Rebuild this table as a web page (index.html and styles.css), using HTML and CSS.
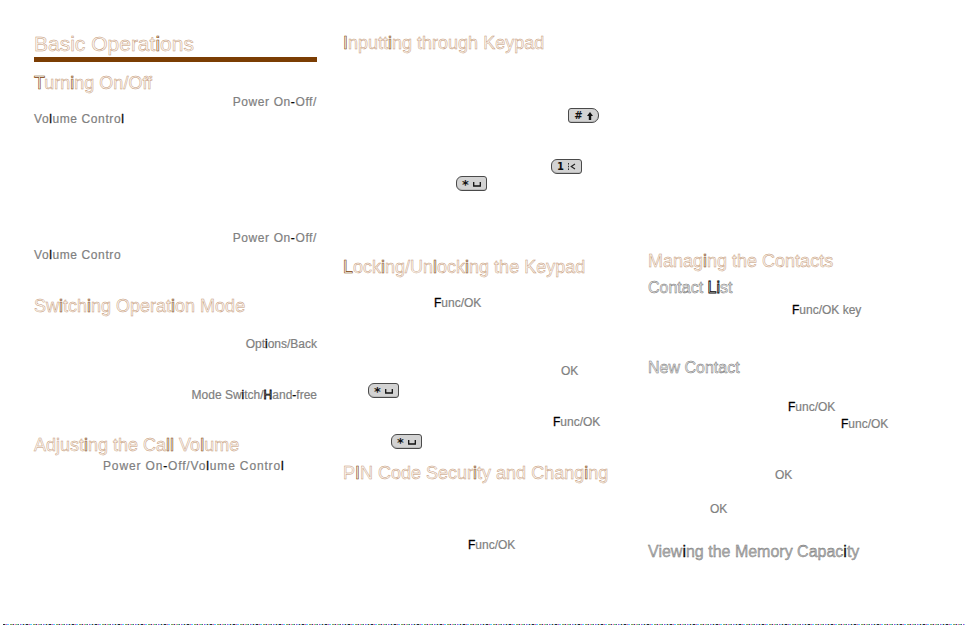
FILE: index.html
```html
<!DOCTYPE html>
<html lang="en">
<head>
<meta charset="utf-8">
<title>Basic Operations</title>
<link rel="stylesheet" href="styles.css">
</head>
<body>
<div class="page">
  <main class="cols">
    <section class="col col1">
      <h1 class="h1">Basic Operat<b class="d">i</b>ons</h1>
      <div class="rule"></div>

      <h2 class="h2 mt10"><b class="d">T</b>urn<b class="d">i</b>ng On/Off</h2>
      <div class="lines">
        <div class="ln r"><span class="t ls">Power On<b class="k">-</b>Off/</span></div>
        <div class="ln"><span class="t ls">Vo<b class="k">l</b>ume Contro<b class="k">l</b></span></div>
        <div class="ln"></div><div class="ln"></div><div class="ln"></div>
        <div class="ln"></div><div class="ln"></div><div class="ln"></div>
        <div class="ln r"><span class="t ls">Power On<b class="k">-</b>Off/</span></div>
        <div class="ln"><span class="t ls">Vo<b class="k">l</b>ume Contro</span></div>
      </div>

      <h2 class="h2 mt31">Sw<b class="d">i</b>tch<b class="d">i</b>ng Operat<b class="d">i</b>on Mode</h2>
      <div class="lines mt19">
        <div class="ln r"><span class="t">Opt<b class="k">i</b>ons/Back</span></div>
        <div class="ln"></div><div class="ln"></div>
        <div class="ln r"><span class="t">Mode Sw<b class="k">i</b>tch/<b class="ko">H</b>and<b class="k">-</b>free</span></div>
      </div>

      <h2 class="h2 mt30">Adjust<b class="d">i</b>ng the Ca<b class="d">ll</b> Vo<b class="d">l</b>ume</h2>
      <div class="lines mt2">
        <div class="ln"><span class="t ls2 in69">Power On<b class="k">-</b>Off/Vo<b class="k">l</b>ume Contro<b class="k">l</b></span></div>
      </div>
    </section>

    <section class="col col2">
      <h2 class="h2"><b class="d">I</b>nputt<b class="d">i</b>ng through Keypad</h2>
      <div class="lines">
        <div class="ln"></div><div class="ln"></div><div class="ln"></div>
        <div class="ln"><span class="key key-r in225"><span class="kc">#</span><svg class="ki" width="6" height="8" viewBox="0 0 6 8"><path d="M3 0L6 4H4.2V8H1.8V4H0Z" fill="#111"/></svg></span></div>
        <div class="ln"></div><div class="ln"></div>
        <div class="ln"><span class="key in208"><span class="kc">1</span><svg class="ki" width="8" height="7" viewBox="0 0 8 7"><rect x="0" y="0" width="1" height="1.6" fill="#333"/><rect x="0" y="2.7" width="1" height="1.6" fill="#333"/><rect x="0" y="5.4" width="1" height="1.6" fill="#333"/><path d="M7 1L3.2 3.5L7 6" fill="none" stroke="#222" stroke-width="1.1"/></svg></span></div>
        <div class="ln"><span class="key in113"><span class="kc star">*</span><svg class="ki" width="8" height="6" viewBox="0 0 8 6"><path d="M0.7 1V5H7.3V1" fill="none" stroke="#111" stroke-width="1.3"/></svg></span></div>
      </div>

      <h2 class="h2 mt66"><b class="d">L</b>ock<b class="d">i</b>ng/Un<b class="d">l</b>ock<b class="d">i</b>ng the Keypad</h2>
      <div class="lines mt17">
        <div class="ln"><span class="t in91"><b class="k">F</b>unc/OK</span></div>
        <div class="ln"></div><div class="ln"></div><div class="ln"></div>
        <div class="ln"><span class="t in218">OK</span></div>
        <div class="ln"><span class="key in25"><span class="kc star">*</span><svg class="ki" width="8" height="6" viewBox="0 0 8 6"><path d="M0.7 1V5H7.3V1" fill="none" stroke="#111" stroke-width="1.3"/></svg></span></div>
        <div class="ln"></div>
        <div class="ln"><span class="t in210"><b class="k">F</b>unc/OK</span></div>
        <div class="ln"><span class="key in48"><span class="kc star">*</span><svg class="ki" width="8" height="6" viewBox="0 0 8 6"><path d="M0.7 1V5H7.3V1" fill="none" stroke="#111" stroke-width="1.3"/></svg></span></div>
      </div>

      <h2 class="h2 mt14">P<b class="d">I</b>N Code Secur<b class="d">i</b>ty and Chang<b class="d">i</b>ng</h2>
      <div class="lines mt2">
        <div class="ln"></div><div class="ln"></div><div class="ln"></div>
        <div class="ln"><span class="t in125"><b class="k">F</b>unc/OK</span></div>
      </div>
    </section>

    <section class="col col3">
      <h2 class="h2 mt218">Manag<b class="d">i</b>ng the Contacts</h2>
      <h3 class="h3 mt6">Contact <b class="k">Li</b>st</h3>
      <div class="lines mt4">
        <div class="ln"><span class="t in144"><b class="k">F</b>unc/OK key</span></div>
        <div class="ln"></div><div class="ln"></div>
      </div>
      <h3 class="h3 mt5">New Contact</h3>
      <div class="lines mt4">
        <div class="ln"></div>
        <div class="ln"><span class="t in140"><b class="k">F</b>unc/OK</span></div>
        <div class="ln"><span class="t in193"><b class="k">F</b>unc/OK</span></div>
        <div class="ln"></div><div class="ln"></div>
        <div class="ln"><span class="t in127">OK</span></div>
        <div class="ln"></div>
        <div class="ln"><span class="t in62">OK</span></div>
      </div>
      <h3 class="h3 mt24 filled">View<b class="k">i</b>ng the Memory Capac<b class="k">i</b>ty</h3>
    </section>
  </main>
  <footer class="noise"></footer>
</div>
</body>
</html>
```
FILE: styles.css
```css
* { box-sizing: border-box; }
html, body { margin: 0; padding: 0; background: #fff; }
body { font-family: "Liberation Sans", Arial, sans-serif; }

.page {
  width: 965px;
  height: 625px;
  display: flex;
  flex-direction: column;
  overflow: hidden;
}

.cols {
  flex: 1;
  display: grid;
  grid-template-columns: 283px 258px 302px;
  column-gap: 26px;
  padding-left: 34px;
}
.col3 { margin-left: 21px; }

.col { padding-top: 32px; display: flex; flex-direction: column; }

b { font-weight: normal; }

.h1, .h2, .h3 {
  margin: 0;
  font-weight: normal;
  white-space: nowrap;
  color: #fdf8f3;
  -webkit-text-stroke: 0.45px #c39673;
}
.h1 { font-size: 21px; line-height: 24px; height: 24px; }
.h2 { font-size: 18px; line-height: 22px; height: 22px; }
.h3 {
  font-size: 16px; line-height: 20px; height: 20px;
  color: #ececec;
  -webkit-text-stroke: 0.45px #6e6e6e;
}
.h3.filled { color: #b4b4b4; -webkit-text-stroke: 0.35px #6a6a6a; }

.d { color: #fff; -webkit-text-stroke: 0.6px #7b3c00; }
.h3 .k { color: #fff; -webkit-text-stroke: 0.8px #000; }
.h3.filled .k { color: #111; -webkit-text-stroke: 0.3px #000; }

.rule { margin-top: 1px; height: 5px; background: #7b3d03; }

.lines { display: flex; flex-direction: column; }
.ln {
  height: 17px;
  display: flex;
  align-items: center;
  white-space: nowrap;
}
.ln.r { justify-content: flex-end; }

.t {
  font-size: 12px;
  line-height: 17px;
  color: #808080;
  -webkit-text-stroke: 0.2px #808080;
}
.t.ls { letter-spacing: 0.6px; }
.t.ls2 { letter-spacing: 0.85px; }
.k { color: #000; -webkit-text-stroke: 0.3px #000; }
.ko { color: #fff; -webkit-text-stroke: 0.8px #000; }

.key {
  width: 31px;
  height: 15px;
  margin-top: 4px;
  flex: none;
  display: inline-flex;
  align-items: center;
  justify-content: center;
  gap: 4px;
  background: #d3d3d3;
  border: 1px solid #4a4a4a;
  border-radius: 6px 3px 3px 6px;
  box-shadow: inset 0 -1px 0 #bdbdbd;
}
.key-r { border-radius: 3px 7px 7px 3px; }
.kc {
  font-family: "DejaVu Sans", "Liberation Sans", sans-serif;
  font-weight: bold;
  font-size: 10px;
  line-height: 10px;
  color: #111;
}
.kc.star { font-size: 13px; line-height: 10px; padding-top: 3px; }
.ki { display: block; flex: none; }

.in25 { margin-left: 25px; }
.in48 { margin-left: 48px; }
.in62 { margin-left: 62px; }
.in69 { margin-left: 69px; }
.in91 { margin-left: 91px; }
.in113 { margin-left: 113px; }
.in125 { margin-left: 125px; }
.in127 { margin-left: 127px; }
.in140 { margin-left: 140px; }
.in144 { margin-left: 144px; }
.in193 { margin-left: 193px; }
.in208 { margin-left: 208px; }
.in210 { margin-left: 210px; }
.in218 { margin-left: 218px; }
.in225 { margin-left: 225px; }

.mt2 { margin-top: 2px; }
.mt4 { margin-top: 4px; }
.mt5 { margin-top: 5px; }
.mt6 { margin-top: 6px; }
.mt10 { margin-top: 10px; }
.mt14 { margin-top: 14px; }
.mt17 { margin-top: 17px; }
.mt19 { margin-top: 19px; }
.mt24 { margin-top: 24px; }
.mt30 { margin-top: 30px; }
.mt31 { margin-top: 31px; }
.mt66 { margin-top: 66px; }
.mt218 { margin-top: 218px; }

.noise {
  height: 1px;
  flex: none;
  margin-left: 3px;
  background: repeating-linear-gradient(90deg,
    #2b2b2b 0 2px, #9ab 2px 3px, #e4c 3px 4px, #5cf 4px 6px,
    #fff 6px 7px, #7a6 7px 9px, #c96 9px 10px, #33a 10px 11px,
    #ddd 11px 12px, #f6a 12px 13px, #6c8 13px 15px, #558 15px 16px,
    #fff 16px 17px, #a4d 17px 18px, #8ce 18px 20px, #444 20px 21px,
    #ec7 21px 22px, #6af 22px 23px);
}
```
